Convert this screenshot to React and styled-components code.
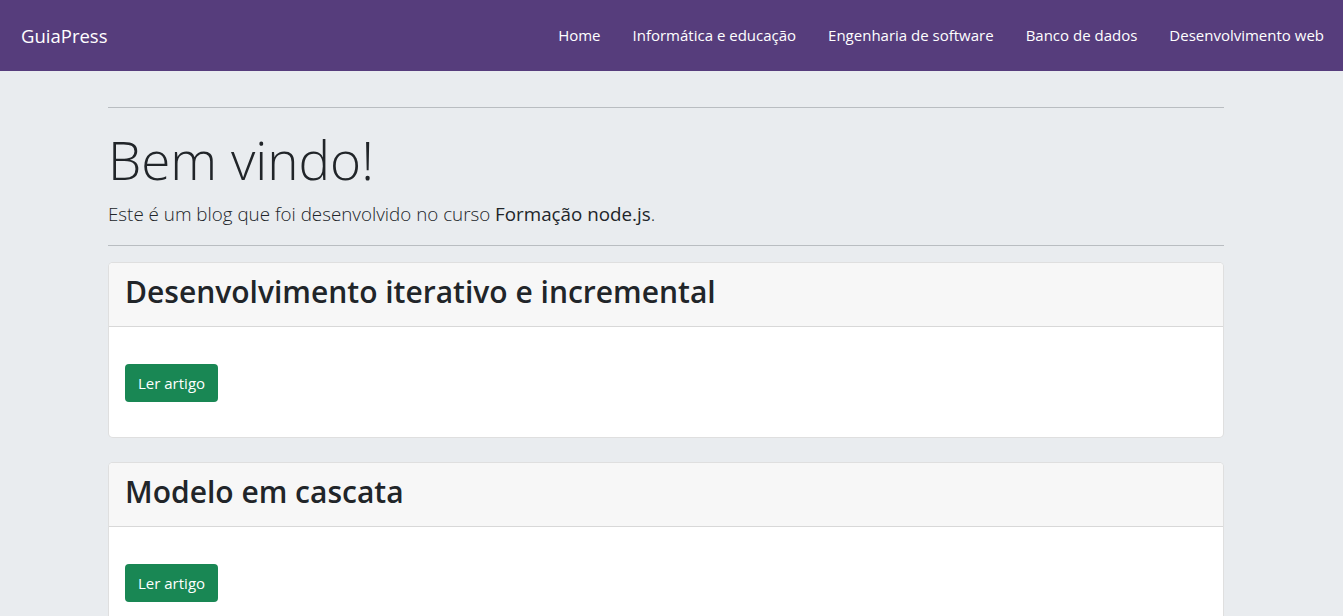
import React from 'react'
import styled, { createGlobalStyle } from 'styled-components'

const GlobalStyle = createGlobalStyle`
  * { box-sizing: border-box; }
  body {
    margin: 0;
    background: #e9ecef;
    color: #212529;
    font-family: "Open Sans", "Noto Sans", sans-serif;
    font-size: 16px;
    line-height: 1.5;
  }
`

const Navbar = styled.nav`
  height: 71px;
  background: #563d7c;
  display: flex;
  align-items: center;
  justify-content: space-between;
  padding: 0 3px 0 21px;
`

const Brand = styled.a`
  color: #fff;
  font-size: 18.5px;
  text-decoration: none;
`

const NavList = styled.ul`
  display: flex;
  list-style: none;
  margin: 0;
  padding: 0;
`

const NavLink = styled.a`
  display: block;
  padding: 8px 16px;
  color: #fff;
  font-size: 15px;
  text-decoration: none;
`

const Page = styled.div`
  padding-right: 11px;
`

const Container = styled.main`
  max-width: 1116px;
  margin: 0 auto;
  padding-top: 36px;
`

const Rule = styled.hr`
  margin: 0;
  border: 0;
  border-top: 1px solid #b9bdc1;
`

const Intro = styled.section`
  padding: 20px 0 17px;
`

const Title = styled.h1`
  margin: 0 0 8px;
  font-size: 53px;
  font-weight: 300;
  line-height: 1.2;
`

const Lead = styled.p`
  margin: 0;
  font-size: 18.8px;
  font-weight: 300;
  span { font-weight: 400; }
`

const Posts = styled.div`
  padding-top: 16px;
`

const Card = styled.article`
  background: #fff;
  border: 1px solid rgba(0, 0, 0, 0.125);
  border-radius: 5px;
  margin-bottom: 24px;
  overflow: hidden;
`

const CardHeader = styled.header`
  background: #f7f7f7;
  border-bottom: 1px solid rgba(0, 0, 0, 0.125);
  padding: 6px 16px 8px;
  height: 64px;
`

const CardTitle = styled.h2`
  margin: 0;
  font-size: 30px;
  font-weight: 600;
  line-height: 1.5;
`

const CardBody = styled.div`
  padding: 37px 16px 35px;
`

const Button = styled.a`
  display: inline-block;
  background: #198754;
  color: #fff;
  font-size: 15px;
  line-height: 24px;
  padding: 7px 13px;
  border-radius: 4px;
  text-decoration: none;
`

const links = ['Home', 'Informática e educação', 'Engenharia de software', 'Banco de dados', 'Desenvolvimento web']
const articles = ['Desenvolvimento iterativo e incremental', 'Modelo em cascata']

export default function App() {
  return (
    <>
      <GlobalStyle />
      <Navbar>
        <Brand href="#">GuiaPress</Brand>
        <NavList>
          {links.map(l => (
            <li key={l}><NavLink href="#">{l}</NavLink></li>
          ))}
        </NavList>
      </Navbar>
      <Page>
        <Container>
          <Rule />
          <Intro>
            <Title>Bem vindo!</Title>
            <Lead>Este é um blog que foi desenvolvido no curso <span>Formação node.js</span>.</Lead>
          </Intro>
          <Rule />
          <Posts>
            {articles.map(a => (
              <Card key={a}>
                <CardHeader>
                  <CardTitle>{a}</CardTitle>
                </CardHeader>
                <CardBody>
                  <Button href="#">Ler artigo</Button>
                </CardBody>
              </Card>
            ))}
          </Posts>
        </Container>
      </Page>
    </>
  )
}
